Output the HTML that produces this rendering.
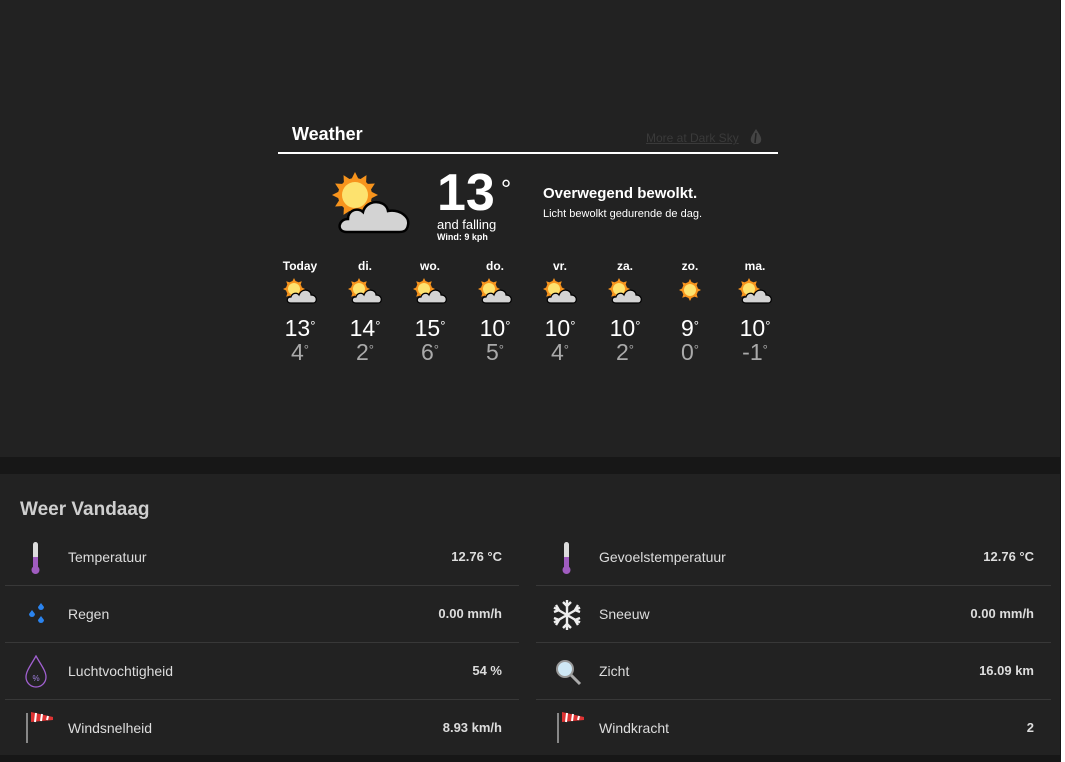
<!DOCTYPE html>
<html><head><meta charset="utf-8"><style>
*{margin:0;padding:0;box-sizing:border-box}
body{width:1065px;height:762px;background:#fff;font-family:"Liberation Sans",Arial,sans-serif;overflow:hidden;position:relative}
#page{position:absolute;left:0;top:0;width:1061px;height:762px;background:#171717}
.card{position:absolute;left:0;width:1060px;background:#222}
.w{position:absolute;color:#fff}
.day{position:absolute;top:259px;width:50px;text-align:center;color:#fff}
.day .n{font-size:12px;font-weight:bold}
.day .hi{font-size:23px;margin-top:42px;line-height:26px}
.day .lo{font-size:23px;color:#aaa;line-height:22px}
sup{font-size:13px;vertical-align:top;position:relative;top:-2px}
.row{position:absolute;height:57px;border-bottom:1px solid #383838;color:#ddd;font-size:14px}
.row .lab{position:absolute;left:63px;top:20px}
.row .val{position:absolute;right:17px;top:20px;font-weight:bold;font-size:13px}
.row .ic{position:absolute;left:14px;top:12px;width:34px;height:34px}
</style></head><body><div id="page">
<div class="card" style="top:0;height:457px">
 <div class="w" style="left:292px;top:124px;font-size:18px;font-weight:bold">Weather</div>
 <div class="w" style="left:646px;top:131px;font-size:12px;color:#3a3a3a;text-decoration:underline">More at Dark Sky</div>
 <svg style="position:absolute;left:749px;top:128px" width="14" height="18"><path d="M7 1 C3 7 1 10 2 13 C3 17 11 17 12 13 C13 10 11 7 7 1Z" fill="#444"/><path d="M7 5 L6 15" stroke="#222" stroke-width="1.5"/></svg>
 <div style="position:absolute;left:278px;top:152px;width:500px;height:2px;background:#fff"></div>
 <svg style="position:absolute;left:330px;top:171px" width="82" height="64">
  <g fill="#f7941d" transform="translate(25,24)">
   <polygon points="0,-23 4,-15 -4,-15"/><polygon points="0,-23 4,-15 -4,-15" transform="rotate(30)"/><polygon points="0,-23 4,-15 -4,-15" transform="rotate(60)"/><polygon points="0,-23 4,-15 -4,-15" transform="rotate(90)"/><polygon points="0,-23 4,-15 -4,-15" transform="rotate(120)"/><polygon points="0,-23 4,-15 -4,-15" transform="rotate(150)"/><polygon points="0,-23 4,-15 -4,-15" transform="rotate(180)"/><polygon points="0,-23 4,-15 -4,-15" transform="rotate(210)"/><polygon points="0,-23 4,-15 -4,-15" transform="rotate(240)"/><polygon points="0,-23 4,-15 -4,-15" transform="rotate(270)"/><polygon points="0,-23 4,-15 -4,-15" transform="rotate(300)"/><polygon points="0,-23 4,-15 -4,-15" transform="rotate(330)"/>
   <circle r="17"/><circle r="13" fill="#fde26e"/></g>
  <path d="M17 61 C6 61 8 48 18 48 C18 39 28 36 33 41 C36 28 56 28 58 40 C70 38 80 46 78 54 C77 61 72 61 68 61Z" fill="#d3d3d3" stroke="#000" stroke-width="2.5"/>
 </svg>
 <div class="w" style="left:437px;top:163px;font-size:52px;font-weight:bold;line-height:60px">13<span style="font-size:26px;vertical-align:top;font-weight:normal;position:relative;top:-4px;margin-left:6px">°</span></div>
 <div class="w" style="left:437px;top:217px;font-size:13px">and falling</div>
 <div class="w" style="left:437px;top:232px;font-size:9px;font-weight:bold">Wind: 9 kph</div>
 <div class="w" style="left:543px;top:185px;font-size:15px;font-weight:bold">Overwegend bewolkt.</div>
 <div class="w" style="left:543px;top:208px;font-size:11px">Licht bewolkt gedurende de dag.</div>
 <div class="day" style="left:275px"><div class="n">Today</div><div class="hi">13<sup>°</sup></div><div class="lo">4<sup>°</sup></div></div>
 <div class="day" style="left:340px"><div class="n">di.</div><div class="hi">14<sup>°</sup></div><div class="lo">2<sup>°</sup></div></div>
 <div class="day" style="left:405px"><div class="n">wo.</div><div class="hi">15<sup>°</sup></div><div class="lo">6<sup>°</sup></div></div>
 <div class="day" style="left:470px"><div class="n">do.</div><div class="hi">10<sup>°</sup></div><div class="lo">5<sup>°</sup></div></div>
 <div class="day" style="left:535px"><div class="n">vr.</div><div class="hi">10<sup>°</sup></div><div class="lo">4<sup>°</sup></div></div>
 <div class="day" style="left:600px"><div class="n">za.</div><div class="hi">10<sup>°</sup></div><div class="lo">2<sup>°</sup></div></div>
 <div class="day" style="left:665px"><div class="n">zo.</div><div class="hi">9<sup>°</sup></div><div class="lo">0<sup>°</sup></div></div>
 <div class="day" style="left:730px"><div class="n">ma.</div><div class="hi">10<sup>°</sup></div><div class="lo">-1<sup>°</sup></div></div>
 <svg style="position:absolute;left:0;top:0" width="1060" height="457">
  <defs>
  <g id="sunS" fill="#f7941d"><circle r="8"/><g><polygon points="0,-11 2,-7 -2,-7"/><polygon points="0,-11 2,-7 -2,-7" transform="rotate(45)"/><polygon points="0,-11 2,-7 -2,-7" transform="rotate(90)"/><polygon points="0,-11 2,-7 -2,-7" transform="rotate(135)"/><polygon points="0,-11 2,-7 -2,-7" transform="rotate(180)"/><polygon points="0,-11 2,-7 -2,-7" transform="rotate(225)"/><polygon points="0,-11 2,-7 -2,-7" transform="rotate(270)"/><polygon points="0,-11 2,-7 -2,-7" transform="rotate(315)"/></g><circle r="6" fill="#fde26e"/></g>
  <g id="sc"><use href="#sunS" x="10" y="11"/><path d="M7 25 C2 25 2 19 7 19 C8 15 13 14 15 17 C17 10 27 11 27 17 C31 17 33 20 32 23 C31 25 30 25 28 25Z" fill="#d3d3d3" stroke="#000" stroke-width="1.2"/></g>
  </defs>
  <use href="#sc" x="284" y="278"/><use href="#sc" x="349" y="278"/><use href="#sc" x="414" y="278"/>
  <use href="#sc" x="479" y="278"/><use href="#sc" x="544" y="278"/><use href="#sc" x="609" y="278"/>
  <use href="#sunS" x="690" y="290"/><use href="#sc" x="739" y="278"/>
 </svg>
</div>
<div class="card" style="top:474px;height:281px">
 <div style="position:absolute;left:20px;top:25px;font-size:19px;font-weight:bold;color:#cfcfcf">Weer Vandaag</div>
 <div class="row" style="left:5px;top:55px;width:514px"><svg class="ic" viewBox="0 0 34 34"><rect x="14" y="1" width="5" height="26" rx="2.5" fill="#ddd"/><rect x="14" y="16" width="5" height="11" fill="#a05cc0"/><circle cx="16.5" cy="29" r="4" fill="#a05cc0"/></svg><span class="lab">Temperatuur</span><span class="val">12.76 °C</span></div>
 <div class="row" style="left:5px;top:112px;width:514px"><svg class="ic" viewBox="0 0 34 34"><g fill="#2a84f0"><path d="M13 12 l3 4 a3 3 0 1 1 -6 0z"/><path d="M22 5 l3 4 a3 3 0 1 1 -6 0z"/><path d="M22 18 l3 4 a3 3 0 1 1 -6 0z"/></g></svg><span class="lab">Regen</span><span class="val">0.00 mm/h</span></div>
 <div class="row" style="left:5px;top:169px;width:514px"><svg class="ic" viewBox="0 0 34 34"><path d="M17 1 C12 10 7 16 7 22 a10 10 0 0 0 20 0 C27 16 22 10 17 1Z" fill="none" stroke="#a060d0" stroke-width="1.3"/><text x="17" y="26" font-size="8" fill="#a080e0" text-anchor="middle" font-family="Liberation Sans">%</text></svg><span class="lab">Luchtvochtigheid</span><span class="val">54 %</span></div>
 <div class="row" style="left:5px;top:226px;width:514px;border:none"><svg class="ic" viewBox="0 0 34 34" style="top:10px"><rect x="7" y="3" width="2" height="30" fill="#888"/><path d="M12 2 L34 7 L34 10 L12 12Z" fill="#d33"/><path d="M17 3 L16 12 M23 4 L22 11 M29 6 L28 10" stroke="#fff" stroke-width="2"/></svg><span class="lab">Windsnelheid</span><span class="val">8.93 km/h</span></div>
 <div class="row" style="left:536px;top:55px;width:515px"><svg class="ic" viewBox="0 0 34 34"><rect x="14" y="1" width="5" height="26" rx="2.5" fill="#ddd"/><rect x="14" y="16" width="5" height="11" fill="#a05cc0"/><circle cx="16.5" cy="29" r="4" fill="#a05cc0"/></svg><span class="lab">Gevoelstemperatuur</span><span class="val">12.76 °C</span></div>
 <div class="row" style="left:536px;top:112px;width:515px"><svg class="ic" viewBox="0 0 34 34"><g stroke="#eee" stroke-width="2.4" fill="none"><path d="M17 2 V32 M4 9.5 L30 24.5 M4 24.5 L30 9.5"/><path d="M13 4 L17 8 L21 4 M13 30 L17 26 L21 30"/><path d="M4 14 L9 12 L6 7 M30 20 L25 22 L28 27 M4 20 L9 22 L6 27 M30 14 L25 12 L28 7"/></g></svg><span class="lab">Sneeuw</span><span class="val">0.00 mm/h</span></div>
 <div class="row" style="left:536px;top:169px;width:515px"><svg class="ic" viewBox="0 0 34 34"><path d="M20 19 L30 29" stroke="#aaa" stroke-width="3"/><circle cx="15" cy="14" r="8" fill="#cfe8f5" stroke="#999" stroke-width="2"/></svg><span class="lab">Zicht</span><span class="val">16.09 km</span></div>
 <div class="row" style="left:536px;top:226px;width:515px;border:none"><svg class="ic" viewBox="0 0 34 34" style="top:10px"><rect x="7" y="3" width="2" height="30" fill="#888"/><path d="M12 2 L34 7 L34 10 L12 12Z" fill="#d33"/><path d="M17 3 L16 12 M23 4 L22 11 M29 6 L28 10" stroke="#fff" stroke-width="2"/></svg><span class="lab">Windkracht</span><span class="val">2</span></div>
</div>
</div></body></html>
